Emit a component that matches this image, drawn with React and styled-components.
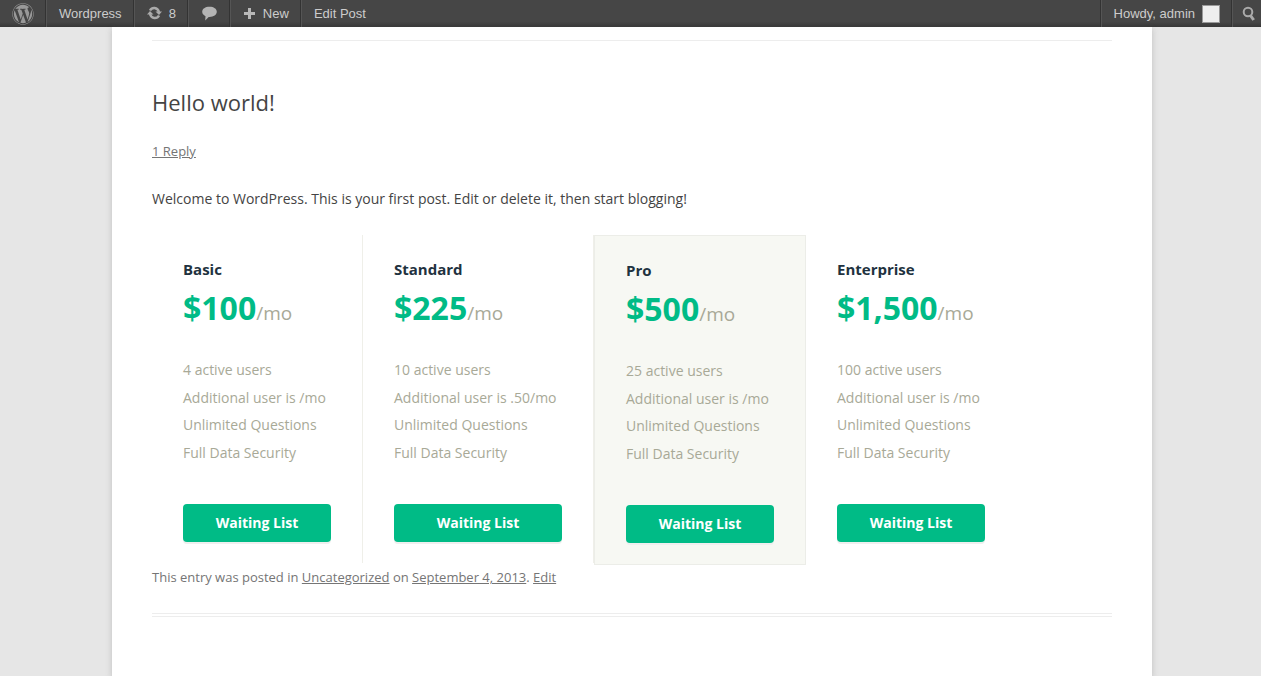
import React from "react";
import styled, { createGlobalStyle } from "styled-components";
import { FaWordpress } from "react-icons/fa";

const GlobalStyle = createGlobalStyle`
  * { box-sizing: border-box; }
  body {
    margin: 0;
    background: #e6e6e6;
    color: #444;
    font-family: "Open Sans", Helvetica, Arial, sans-serif;
    font-size: 14px;
  }
`;

const AdminBar = styled.nav`
  display: flex;
  justify-content: space-between;
  height: 27px;
  background: linear-gradient(to top, #373737 0, #464646 5px);
  font: 13px/27px "Liberation Sans", Arial, sans-serif;
`;

const BarGroup = styled.div`
  display: flex;
`;

const BarItem = styled.a`
  display: flex;
  align-items: center;
  gap: 7px;
  padding: 0 12px;
  color: #ccc;
  text-decoration: none;
  border-right: 1px solid ${(p) => (p.$last ? "transparent" : "#555")};
  box-shadow: ${(p) => (p.$last ? "none" : "inset -1px 0 #333")};

  svg { flex: none; }
`;

const BarItemEnd = styled(BarItem)`
  border-right: 0;
  border-left: 1px solid #555;
  box-shadow: -1px 0 #333;
`;

const SearchButton = styled.button`
  display: flex;
  align-items: center;
  width: 29px;
  padding: 0 0 0 9px;
  border: 0;
  border-left: 1px solid #555;
  box-shadow: -1px 0 #333;
  background: none;
`;

const Avatar = styled.span`
  flex: none;
  width: 18px;
  height: 18px;
  border: 1px solid #999;
  background: #eee;
`;

const Shell = styled.div`
  padding-left: 3px;
`;

const Page = styled.main`
  max-width: 1040px;
  min-height: calc(100vh - 27px);
  margin: 0 auto;
  padding: 13px 40px 48px;
  background: #fff;
  box-shadow: 0 2px 6px rgba(100, 100, 100, 0.3);
`;

const Post = styled.article`
  padding-top: 47px;
  padding-bottom: 24px;
  border-top: 1px solid #ededed;
  border-bottom: 4px double #ededed;
`;

const Title = styled.h1`
  margin: 0;
  font-size: 22px;
  line-height: 28px;
  font-weight: 400;
`;

const Replies = styled.div`
  margin-top: 23px;
  font-size: 13px;
  line-height: 24px;
  color: #757575;
`;

const MetaLink = styled.a`
  color: #757575;
`;

const Intro = styled.p`
  margin: 24px 0;
  line-height: 24px;
`;

const Plans = styled.div`
  display: flex;
  align-items: flex-start;
`;

const Plan = styled.section`
  box-sizing: content-box;
  min-width: ${(p) => (p.$wide ? 168 : 148)}px;
  padding: 23px 31px 21px;
  border: 0 solid #efefe9;
  border-right-width: ${(p) => (p.$divider ? 1 : 0)}px;
  ${(p) => p.$featured && "border-width: 1px; border-color: #ecede8; background: #f7f8f3;"}
`;

const PlanName = styled.h2`
  margin: 0;
  font-size: 15px;
  line-height: 22px;
  font-weight: 700;
  color: #1f3240;
`;

const Price = styled.p`
  margin: 0;
  font-size: 32px;
  line-height: 56px;
  font-weight: 700;
  color: #00bb86;
`;

const Period = styled.span`
  font-size: 19px;
  font-weight: 400;
  color: #a8a997;
`;

const Features = styled.ul`
  display: grid;
  height: 110px;
  margin: 15px 0 38px;
  padding: 0;
  list-style: none;
  font-size: 14px;
  line-height: 27px;
  color: #a8a997;
  white-space: nowrap;
`;

const WaitButton = styled.button`
  display: block;
  width: 100%;
  height: 38px;
  padding: 0;
  border: 0;
  border-radius: 4px;
  box-shadow: 0 2px 0 #efefef;
  background: #00bb86;
  color: #fff;
  font: 700 14px/38px "Open Sans", sans-serif;
`;

const EntryMeta = styled.footer`
  font-size: 13px;
  line-height: 24px;
  color: #757575;
`;

const plans = [
  { name: "Basic", price: "$100", users: "4 active users", extra: "Additional user is /mo", divider: true },
  { name: "Standard", price: "$225", users: "10 active users", extra: "Additional user is .50/mo", divider: true, wide: true },
  { name: "Pro", price: "$500", users: "25 active users", extra: "Additional user is /mo", featured: true },
  { name: "Enterprise", price: "$1,500", users: "100 active users", extra: "Additional user is /mo" },
];

const UpdateIcon = () => (
  <svg width="15" height="16" viewBox="0 0 15 16" fill="none" aria-hidden="true">
    <path d="M3 4.500C5 .8 10.500 .8 12 6M12 9.500C10 13.200 4.500 13.200 3 8" stroke="#aaa" strokeWidth="2.500" />
    <path d="M8.500 5.500H15L12 9zM6.500 8.500H0L3 5z" fill="#aaa" />
  </svg>
);

const CommentIcon = () => (
  <svg width="17" height="15" viewBox="0 0 17 15" aria-hidden="true">
    <path d="M8.500 .8c4.200 0 7.300 2 7.300 5s-3.100 5.200-7.300 5.200l-.8 0L4.200 14.500l.3-4.300C2.500 9.300 1.200 7.800 1.200 5.800c0-3 3.100-5 7.300-5z" fill="#b4b4b4" />
  </svg>
);

const PlusIcon = () => (
  <svg width="13" height="12" viewBox="0 0 13 12" aria-hidden="true">
    <path d="M5 0h3v4h4v3H8v4H5V7H1V4h4z" fill="#b8b8b8" />
  </svg>
);

const SearchIcon = () => (
  <svg width="14" height="16" viewBox="0 0 14 16" fill="none" stroke="#aaa" aria-hidden="true">
    <circle cx="6" cy="6" r="4.300" strokeWidth="2" />
    <path d="M8.500 9.500l3.200 4.500" strokeWidth="3" />
  </svg>
);

export default function App() {
  return (
    <>
      <GlobalStyle />
      <AdminBar>
        <BarGroup>
          <BarItem href="#" aria-label="About WordPress">
            <FaWordpress size={22} color="#999" />
          </BarItem>
          <BarItem href="#">Wordpress</BarItem>
          <BarItem href="#"><UpdateIcon />8</BarItem>
          <BarItem href="#" aria-label="Comments"><CommentIcon /></BarItem>
          <BarItem href="#"><PlusIcon />New</BarItem>
          <BarItem href="#" $last>Edit Post</BarItem>
        </BarGroup>
        <BarGroup>
          <BarItemEnd href="#">Howdy, admin<Avatar /></BarItemEnd>
          <SearchButton aria-label="Search"><SearchIcon /></SearchButton>
        </BarGroup>
      </AdminBar>
      <Shell>
        <Page>
          <Post>
            <Title>Hello world!</Title>
            <Replies><MetaLink href="#">1 Reply</MetaLink></Replies>
            <Intro>Welcome to WordPress. This is your first post. Edit or delete it, then start blogging!</Intro>
            <Plans>
              {plans.map((plan) => (
                <Plan key={plan.name} $divider={plan.divider} $featured={plan.featured} $wide={plan.wide}>
                  <PlanName>{plan.name}</PlanName>
                  <Price>{plan.price}<Period>/mo</Period></Price>
                  <Features>
                    <li>{plan.users}</li>
                    <li>{plan.extra}</li>
                    <li>Unlimited Questions</li>
                    <li>Full Data Security</li>
                  </Features>
                  <WaitButton>Waiting List</WaitButton>
                </Plan>
              ))}
            </Plans>
            <EntryMeta>
              This entry was posted in <MetaLink href="#">Uncategorized</MetaLink> on{" "}
              <MetaLink href="#">September 4, 2013</MetaLink>. <MetaLink href="#">Edit</MetaLink>
            </EntryMeta>
          </Post>
        </Page>
      </Shell>
    </>
  );
}
